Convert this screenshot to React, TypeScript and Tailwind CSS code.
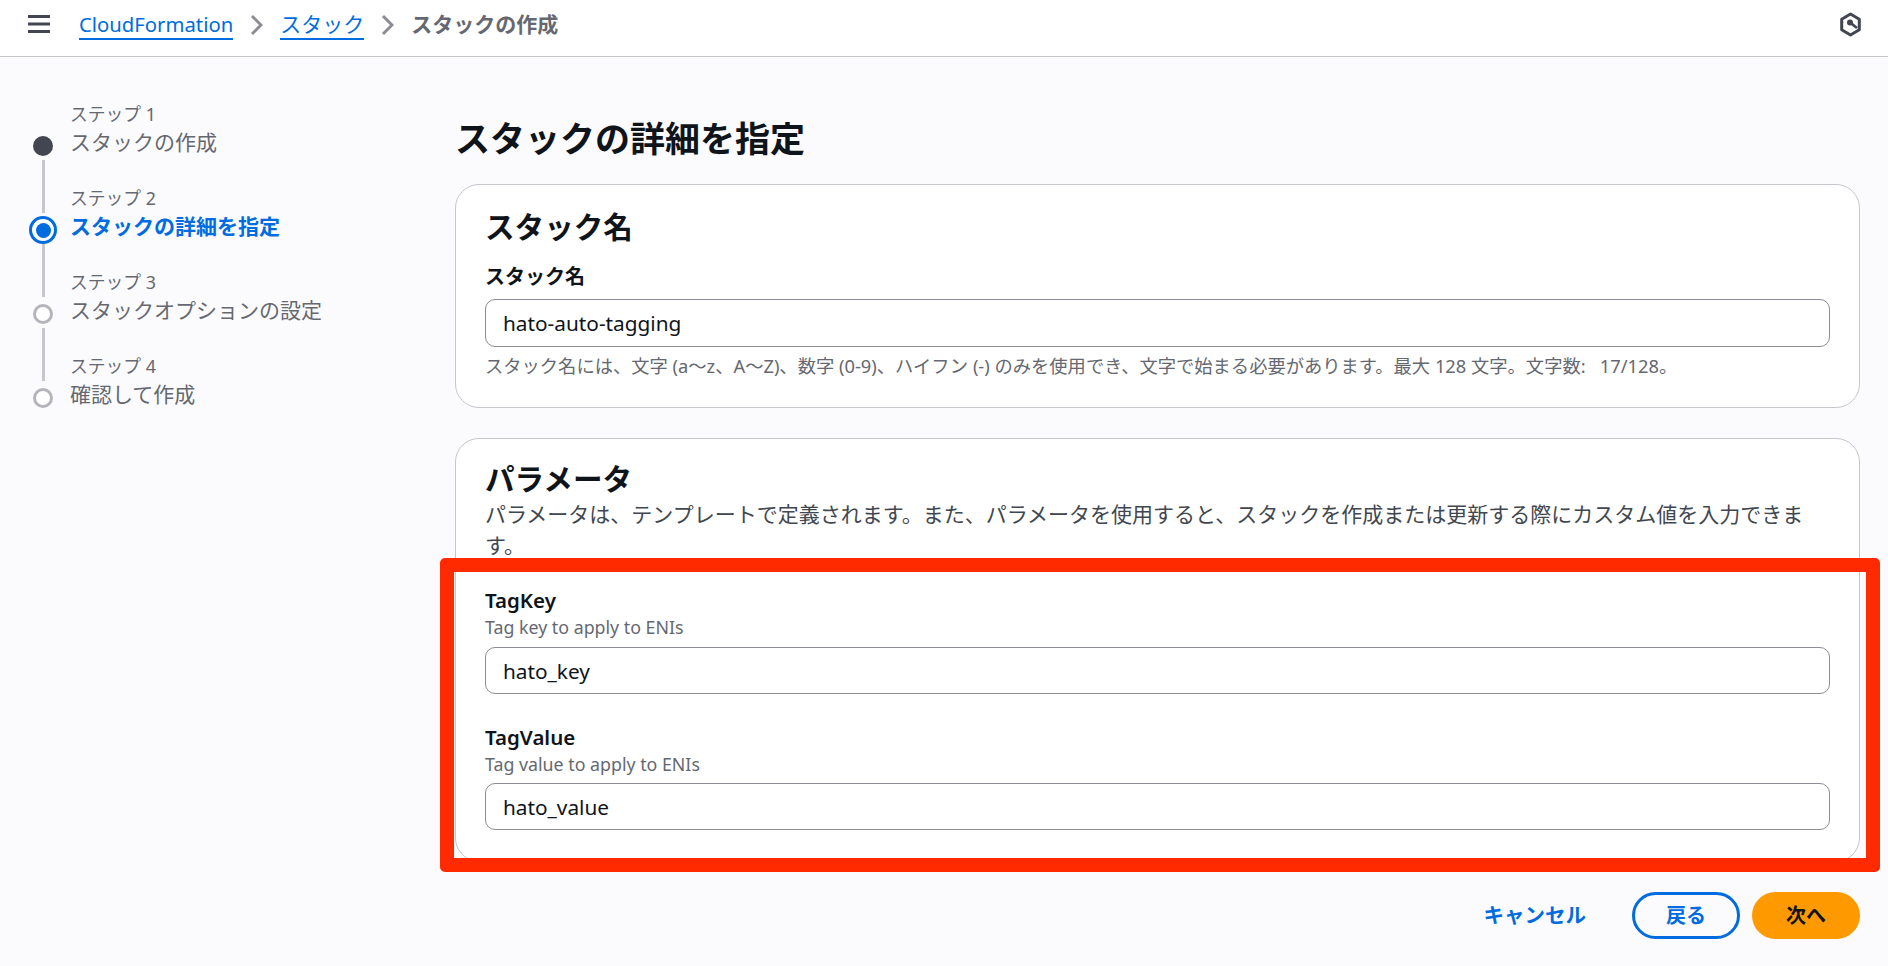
const steps = [
  { step: "ステップ 1", title: "スタックの作成", state: "done" },
  { step: "ステップ 2", title: "スタックの詳細を指定", state: "current" },
  { step: "ステップ 3", title: "スタックオプションの設定", state: "todo" },
  { step: "ステップ 4", title: "確認して作成", state: "todo" },
];

function StepDot({ state }: { state: string }) {
  if (state === "done") return <div className="w-[20px] h-[20px] rounded-full bg-[#424650]" />;
  if (state === "current") {
    return (
      <div className="-my-[4px] w-[28px] h-[28px] rounded-full border-[3px] border-[#006ce0] bg-white flex items-center justify-center">
        <div className="w-[15px] h-[15px] rounded-full bg-[#006ce0]" />
      </div>
    );
  }
  return <div className="w-[20px] h-[20px] rounded-full border-[3px] border-[#b4b4bb] bg-white" />;
}

function Stepper() {
  return (
    <nav className="w-[455px] shrink-0 pt-[79px] pl-[33px]">
      {steps.map((s, i) => (
        <div key={s.step} className="flex h-[84px] gap-[17px]">
          <div className="w-[20px] flex flex-col items-center">
            <StepDot state={s.state} />
            {i < steps.length - 1 && <div className="w-[3px] h-[53px] mt-[4px] shrink-0 bg-[#c6c6cd]" />}
          </div>
          <div className="-mt-[36px]">
            <div className="h-[28px] leading-[28px] text-[17.8px] text-[#656871]">{s.step}</div>
            <div
              className={
                s.state === "current"
                  ? "h-[29px] leading-[29px] text-[21px] font-bold text-[#006ce0]"
                  : "h-[29px] leading-[29px] text-[21px] text-[#656871]"
              }
            >
              {s.title}
            </div>
          </div>
        </div>
      ))}
    </nav>
  );
}

function Chevron() {
  return (
    <svg width="13" height="22" viewBox="0 0 13 22" className="mx-[17px]" fill="none">
      <path d="M2 2l9 9-9 9" stroke="#8c8c94" strokeWidth="3" />
    </svg>
  );
}

function TextField({ value, tall }: { value: string; tall?: boolean }) {
  return (
    <input
      readOnly
      value={value}
      className={
        (tall ? "h-[48px] " : "h-[47px] ") +
        "block w-full rounded-[10px] border border-[#8c8c94] bg-white px-[17px] text-[20.8px] text-[#0f141a] outline-none"
      }
    />
  );
}

export default function App() {
  return (
    <div className="h-screen overflow-hidden bg-[#fbfbfd] font-['Noto_Sans','Noto_Sans_CJK_JP',sans-serif]">
      <header className="h-[57px] bg-white border-b border-[#c6c6cd] flex items-center pl-[28px] pr-[27px]">
        <svg width="22" height="18" viewBox="0 0 22 18" className="-mt-[8px]">
          <path d="M0 1.5h22M0 9h22M0 16.5h22" stroke="#424650" strokeWidth="3" />
        </svg>
        <div className="ml-[29px] -mt-[6px] flex items-center text-[21px]">
          <a className="text-[20.3px] text-[#006ce0] border-b-2 border-[#006ce0] leading-[28px]">CloudFormation</a>
          <Chevron />
          <a className="text-[#006ce0] border-b-2 border-[#006ce0] leading-[28px]">スタック</a>
          <Chevron />
          <span className="text-[#656871] font-semibold">スタックの作成</span>
        </div>
        <svg width="23" height="25" viewBox="0 0 23 25" className="ml-auto -mt-[7px] -mr-[1px]" fill="none" stroke="#424650">
          <path d="M11.5 2l8.8 5.2v10.6l-8.8 5.2-8.8-5.2V7.2z" strokeWidth="3" strokeLinejoin="round" />
          <circle cx="11" cy="10.5" r="3" fill="#424650" stroke="none" />
          <path d="M11 10.5l7 5.5" strokeWidth="2.8" />
        </svg>
      </header>

      <div className="flex">
        <Stepper />
        <main className="w-[1405px] shrink-0">
          <h1 className="mt-[59px] h-[46px] leading-[46px] text-[35px] font-bold text-[#0f141a]">スタックの詳細を指定</h1>

          <section className="mt-[22px] h-[224px] rounded-[24px] border border-[#c6c6cd] bg-white px-[29px] pt-[20px]">
            <h2 className="h-[44px] leading-[44px] text-[29.6px] font-bold text-[#0f141a]">スタック名</h2>
            <label className="block mt-[14px] h-[28px] leading-[28px] text-[20px] font-semibold text-[#0f141a]">スタック名</label>
            <div className="mt-[8px]">
              <TextField tall value="hato-auto-tagging" />
            </div>
            <p className="mt-[7px] text-[18.3px] leading-[24px] text-[#656871]">
              スタック名には、文字 (a〜z、A〜Z)、数字 (0-9)、ハイフン (-) のみを使用でき、文字で始まる必要があります。最大 128 文字。文字数:&nbsp;&nbsp;&nbsp;17/128。
            </p>
          </section>

          <section className="relative mt-[30px] h-[424px] rounded-[24px] border border-[#c6c6cd] bg-white px-[29px] pt-[20px]">
            <h2 className="h-[40px] leading-[40px] text-[29.6px] font-bold text-[#0f141a]">パラメータ</h2>
            <p className="pr-[24px] text-[21px] leading-[31px] text-[#414750]">
              パラメータは、テンプレートで定義されます。また、パラメータを使用すると、スタックを作成または更新する際にカスタム値を入力できます。
            </p>
            <div className="mt-[27px] h-[24px] leading-[24px] text-[20.5px] font-semibold text-[#0f141a]">TagKey</div>
            <div className="mt-[3px] h-[24px] leading-[24px] text-[17.8px] text-[#656871]">Tag key to apply to ENIs</div>
            <div className="mt-[8px]">
              <TextField value="hato_key" />
            </div>
            <div className="mt-[31px] h-[24px] leading-[24px] text-[20.5px] font-semibold text-[#0f141a]">TagValue</div>
            <div className="mt-[3px] h-[24px] leading-[24px] text-[17.8px] text-[#656871]">Tag value to apply to ENIs</div>
            <div className="mt-[7px]">
              <TextField value="hato_value" />
            </div>
            <div className="absolute -left-[16px] -right-[21px] top-[119px] -bottom-[11px] rounded-[5px] border-[14px] border-[#ff2a00] pointer-events-none" />
          </section>

          <div className="mt-[30px] flex items-center justify-end">
            <button className="mr-[46px] text-[20.5px] font-semibold text-[#006ce0]">キャンセル</button>
            <button className="w-[108px] h-[47px] rounded-full border-[3px] border-[#006ce0] text-[20px] font-semibold text-[#006ce0]">戻る</button>
            <button className="ml-[12px] w-[108px] h-[47px] rounded-full bg-[#ff9900] text-[20px] font-semibold text-[#0f141a]">次へ</button>
          </div>
        </main>
      </div>
    </div>
  );
}
